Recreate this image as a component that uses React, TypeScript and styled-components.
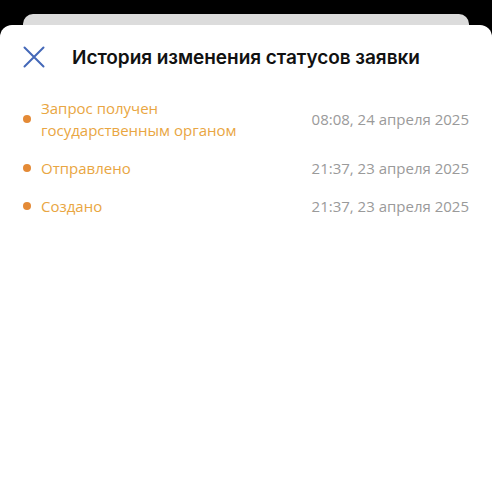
import React from "react";
import styled, { createGlobalStyle } from "styled-components";

const Global = createGlobalStyle`
  html, body { margin: 0; padding: 0; background: #000; }
  body { width: 492px; height: 500px; overflow: hidden; }
`;

const Screen = styled.div`
  width: 492px;
  height: 500px;
  background: #000;
  display: flex;
  flex-direction: column;
  padding-top: 14px;
  box-sizing: border-box;
`;

const BackCard = styled.div`
  margin: 0 23px;
  height: 11px;
  background: #dcdcdc;
  border-radius: 10px 10px 0 0;
  flex-shrink: 0;
`;

const Sheet = styled.div`
  flex: 1;
  background: #fff;
  border-radius: 12px 12px 0 0;
  padding: 0 23px 0 23px;
  display: flex;
  flex-direction: column;
`;

const Header = styled.div`
  display: flex;
  align-items: center;
  height: 64px;
`;

const CloseBtn = styled.button`
  border: 0;
  background: none;
  padding: 0;
  width: 22px;
  height: 22px;
  display: flex;
  align-items: center;
  justify-content: center;
  margin-right: 27px;
  cursor: pointer;
`;

const Title = styled.h1`
  margin: 0;
  font-family: Inter, "Liberation Sans", sans-serif;
  font-weight: 600;
  font-size: 19px;
  color: #111;
  letter-spacing: -0.05px;
`;

const List = styled.div`
  display: flex;
  flex-direction: column;
  gap: 16px;
  padding-top: 8px;
`;

const Row = styled.div`
  display: flex;
  align-items: center;
  font-family: "Open Sans", sans-serif;
  font-size: 15px;
  line-height: 22px;
`;

const Dot = styled.span`
  width: 8px;
  height: 8px;
  border-radius: 50%;
  background: #e48a36;
  flex-shrink: 0;
  margin-right: 10px;
`;

const Status = styled.div`
  color: #e9a642;
  flex: 1;
`;

const DateText = styled.div`
  color: #9a9a9a;
  white-space: nowrap;
`;

const items = [
  { status: ["Запрос получен", "государственным органом"], date: "08:08, 24 апреля 2025" },
  { status: ["Отправлено"], date: "21:37, 23 апреля 2025" },
  { status: ["Создано"], date: "21:37, 23 апреля 2025" },
];

export default function App() {
  return (
    <Screen>
      <Global />
      <BackCard />
      <Sheet>
        <Header>
          <CloseBtn aria-label="Закрыть">
            <svg width="22" height="22" viewBox="0 0 22 22">
              <path d="M1.5 1.5 L20.5 20.5 M20.5 1.5 L1.5 20.5" stroke="#4468b8" strokeWidth="2" strokeLinecap="round" />
            </svg>
          </CloseBtn>
          <Title>История изменения статусов заявки</Title>
        </Header>
        <List>
          {items.map((it, i) => (
            <Row key={i}>
              <Dot />
              <Status>
                {it.status.map((l, j) => (
                  <div key={j}>{l}</div>
                ))}
              </Status>
              <DateText>{it.date}</DateText>
            </Row>
          ))}
        </List>
      </Sheet>
    </Screen>
  );
}
